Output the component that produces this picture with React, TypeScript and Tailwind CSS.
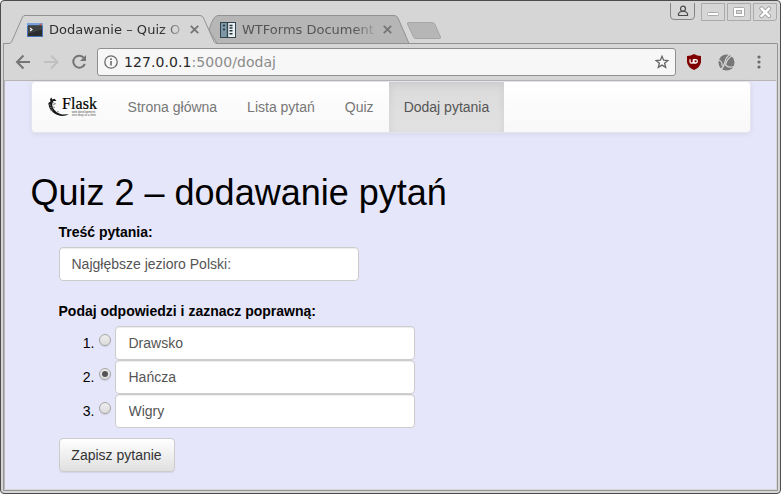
import type { ReactNode } from "react";

const ui = "font-['DejaVu_Sans',sans-serif]";

function CloseX() {
  return (
    <svg width="9" height="9" viewBox="0 0 9 9" className="shrink-0" stroke="#757575" strokeWidth="1.8">
      <path d="M.8 .8 8.2 8.2M8.2 .8 .8 8.2" />
    </svg>
  );
}

function TerminalIcon() {
  return (
    <svg width="16" height="14" viewBox="0 0 16 14" className="shrink-0">
      <rect width="16" height="14" fill="#4774b8" />
      <rect width="16" height="3" fill="#76a2df" />
      <rect x="1" y="2.5" width="14" height="10.5" fill="#2b2c2e" />
      <path d="M1 2.5h14v4L1 11z" fill="#404142" />
      <path d="M3 5l2 1.5L3 8" fill="none" stroke="#fff" strokeWidth="1.1" />
      <rect x="12.5" y=".7" width="2" height="1.3" fill="#f05040" />
    </svg>
  );
}

function DocsIcon() {
  return (
    <svg width="16" height="16" viewBox="0 0 16 16" className="shrink-0">
      <rect x=".5" y=".5" width="15" height="15" fill="#e9eff2" stroke="#34454f" />
      <rect x="1" y="1" width="6" height="14" fill="#7d97a5" />
      <path d="M7.5 1v14" stroke="#34454f" strokeWidth="1.4" />
      <path d="M3 3.5h2M3 7.5h2M9.500 3.500h3M9.500 6h3M9.500 8.800h3M9.500 11.800h3" stroke="#23333c" strokeWidth="1.5" />
    </svg>
  );
}

function TabStrip() {
  return (
    <div className={`relative h-[43px] shrink-0 ${ui} text-[13px]`}>
      <svg className="absolute -left-px -top-px" width="781" height="45" viewBox="0 0 781 45" fill="none" stroke="#929292">
        <path d="M209 30Q213 15.500 218 15.500H394Q397 15.500 398 18L409 43.500H217Z" fill="#b6b6b6" />
        <path d="M409 43.500H777.500" />
        <path d="M3.500 45V43.500H9Q11 43.500 12 41L22.500 17Q23.500 15.500 25 15.500H200Q202.500 15.500 203.500 18L214 41.500Q215 43.500 217 43.500" fill="#d6d6d6" />
        <path d="M408.500 22.500H432Q434 22.500 435 24.500L440.500 37Q441 38.500 439 38.500H416Q414 38.500 413.500 37L407.500 24Q407 22.500 408.500 22.500Z" fill="#b6b6b6" stroke="#a5a5a5" />
      </svg>
      <div className="relative flex h-full pt-[14px]">
        <div className="ml-[26px] flex h-[29px] w-[172px] items-center">
          <TerminalIcon />
          <span className="ml-[6px] w-[132px] whitespace-nowrap tracking-[.04px] text-[#303030] [mask-image:linear-gradient(to_right,black_112px,transparent_139px)]">Dodawanie – Quiz O</span>
          <span className="ml-[9px]"><CloseX /></span>
        </div>
        <div className="ml-[21px] flex h-[29px] w-[173px] items-center">
          <DocsIcon />
          <span className="ml-[6px] w-[132px] whitespace-nowrap text-[#555] [mask-image:linear-gradient(to_right,black_112px,transparent_137px)]">WTForms Document</span>
          <span className="ml-[9px]"><CloseX /></span>
        </div>
      </div>
      <svg className="absolute left-[668px] top-0" width="110" height="24" viewBox="669 1 110 24" fill="none">
        <path d="M670.500 3V16Q670.500 19.500 674 19.500H691Q694.500 19.500 694.500 16V3" stroke="#858585" />
        <circle cx="683" cy="8.700" r="2.500" stroke="#4c4c4c" strokeWidth="1.2" />
        <path d="M678.500 15.500V13.500Q680 11.500 681.500 11.500H684.500Q686 11.500 687.500 13.500V15.500Z" stroke="#4c4c4c" strokeWidth="1.2" />
        <g stroke="#aaa">
          <path d="M701.500 3.500V20.500H724.500V3.500ZM727.500 3.500V20.500H750.500V3.500ZM753.500 3.500V20.500H774Q776.500 20.500 776.500 18V3.500Z" />
          <rect x="707.500" y="12.500" width="11" height="3" rx="1" fill="#fff" />
          <rect x="733.500" y="7.500" width="11" height="9" rx="1" fill="#fff" />
          <rect x="736.500" y="10.500" width="5" height="3" fill="#d6d6d6" />
        </g>
        <path d="M761.500 8.500 769 16M769 8.500 761.500 16" stroke="#999" strokeWidth="4.200" strokeLinecap="round" />
        <path d="M761.500 8.500 769 16M769 8.500 761.500 16" stroke="#fff" strokeWidth="2.500" strokeLinecap="round" />
      </svg>
    </div>
  );
}

function Toolbar() {
  return (
    <div className={`flex h-[36px] shrink-0 items-center pl-[11px] ${ui}`}>
      <svg width="78" height="20" viewBox="12 52 78 20" fill="none" strokeWidth="2" className="shrink-0">
        <path d="M30 62H17M23.500 55.500 17 62 23.500 68.500" stroke="#757575" />
        <path d="M44 62H57M51 55.500 57.500 62 51 68.500" stroke="#c0c0c0" />
        <path d="M84 58A6 6 0 1 0 84.800 64" stroke="#757575" />
        <path d="M86 55V61H80Z" fill="#757575" />
      </svg>
      <div className="ml-[7px] flex h-[28px] w-[579px] shrink-0 items-center rounded-[3px] border border-[#8f8f8f] bg-[#f7f7f7] pl-[6px] pr-[6px]">
        <svg width="14" height="14" viewBox="0 0 14 14" fill="none" stroke="#6b6b6b" strokeWidth="1.300">
          <circle cx="7" cy="7" r="6.200" />
          <path d="M7 6V10.500M7 3.300V4.900" strokeWidth="1.600" />
        </svg>
        <span className="ml-[6px] text-[14px] tracking-[.07px] text-[#282828]">127.0.0.1<span className="text-[#8b8b8b]">:5000/dodaj</span></span>
        <svg className="ml-auto" width="14" height="14" viewBox="0 0 14 14" fill="none" stroke="#666" strokeWidth="1.300">
          <path d="M7 1.300 8.600 5.200 12.900 5.500 9.600 8.200 10.700 12.400 7 10.100 3.300 12.400 4.400 8.200 1.100 5.500 5.400 5.200Z" />
        </svg>
      </div>
      <svg className="ml-[11px] shrink-0" width="14" height="16" viewBox="0 0 14 16">
        <path d="M7 0Q10 2 14 2V8Q13.500 13 7 16Q.5 13 0 8V2Q4 2 7 0Z" fill="#800000" />
        <path d="M3 5.300V7.500A1.600 1.600 0 0 0 6.300 7.500V5.300M7 9V5.700H8.700A1.650 1.650 0 0 1 8.700 9Z" fill="none" stroke="#fff" strokeWidth="1.300" />
      </svg>
      <svg className="ml-[17px] shrink-0" width="17" height="17" viewBox="0 0 17 17">
        <circle cx="8.500" cy="8.500" r="8" fill="#777" />
        <g stroke="#d6d6d6" fill="none">
          <path d="M0 6Q4.500 6.500 4 12" strokeWidth="1.200" />
          <path d="M2.500 16Q6 13 7 8Q8 3 12 .5" strokeWidth="1.300" />
          <path d="M14.500 1.500Q8.500 5 7.500 11Q10.500 14.500 16 12.500" strokeWidth="1.200" />
        </g>
      </svg>
      <svg className="ml-[22px] shrink-0" width="4" height="14" viewBox="0 0 4 14" fill="#6b6b6b">
        <circle cx="2" cy="2" r="1.600" /><circle cx="2" cy="7" r="1.600" /><circle cx="2" cy="12" r="1.600" />
      </svg>
    </div>
  );
}

function FlaskLogo() {
  return (
    <div className="flex h-5 w-[50px]">
      <svg className="-mr-[8px] shrink-0" width="22" height="20" viewBox="0 0 22 20">
        <path d="M2 2 3.500 .5 4.200 2.500 6.500 1.800 8.500 4 5.500 4Q3.300 7 5 11Q8 16 14 17.500L21 17.200Q17 19.500 12 18.800Q4 16.500 1.200 10.500L.3 6 2.500 4.500Z" fill="#171717" />
        <path d="M0 7 3 8.500M.8 10 4 11M5 8 8 6.500M5 10 7 10.500M9 14.500 11 15M5 5.500 7 6.500M2 13 5 13" stroke="#777" strokeWidth=".8" />
      </svg>
      <div className="flex w-[36px] shrink-0 flex-col">
        <span className="h-[14px] font-['Liberation_Serif',serif] text-[16px] leading-[14px] tracking-[.1px] text-black [-webkit-text-stroke:.2px_black]">Flask</span>
        <span className="flex flex-col items-end whitespace-nowrap pr-[2px] font-['Liberation_Sans',sans-serif] text-[3px] leading-[3px] text-[#555]">
          <span>web development,</span>
          <span>one drop at a time</span>
        </span>
      </div>
    </div>
  );
}

function NavItem({ children, active = false }: { children: ReactNode; active?: boolean }) {
  return (
    <a className={`flex h-[50px] items-center whitespace-nowrap ${active ? "w-[115px] bg-linear-to-b from-[#dbdbdb] to-[#e2e2e2] px-[15px] text-[#555] shadow-[inset_0_3px_9px_rgba(0,0,0,.075)]" : "px-[15px] text-[#777]"}`}>{children}</a>
  );
}

function TextField({ value }: { value: string }) {
  return (
    <input readOnly value={value} className="block h-[34px] w-[300px] rounded-[4px] border border-[#ccc] bg-white px-[11.5px] text-[14px] text-[#555] shadow-[inset_0_1px_1px_rgba(0,0,0,.075)] outline-none" />
  );
}

function Answer({ n, value, checked = false }: { n: number; value: string; checked?: boolean }) {
  return (
    <li className="flex [&>input]:pl-[12.5px]">
      <span className="mt-[7px] w-[35.5px] text-right">{n}.</span>
      <span className="ml-[4.5px] mt-[8px] mr-[4px] flex size-3 items-center justify-center rounded-full border border-[#a6a6a6] bg-linear-to-b from-[#ededed] to-[#dcdcdc] shadow-[0_1px_1px_rgba(0,0,0,.12)]">
        {checked && <span className="size-[6px] rounded-full bg-[#555]" />}
      </span>
      <TextField value={value} />
    </li>
  );
}

export default function App() {
  return (
    <div className="h-[494px] w-[781px] bg-white">
      <div className="flex h-full w-full flex-col overflow-hidden rounded-[4px] border border-[#504c4e] bg-[#d6d6d6]">
        <TabStrip />
        <div className="mx-[2px] mb-[2px] flex min-h-0 flex-1 flex-col border-x border-b border-[#969696]">
          <div className="-ml-[3px] flex flex-col"><Toolbar /></div>
          <main className="mb-px mr-px flex-1 border-l border-t border-[#bab6b6] bg-[#e6e6fa] font-['Liberation_Sans',Arial,sans-serif] text-[14px] leading-5 text-black">
            <nav className="ml-[26px] flex h-[52px] w-[720px] rounded-[4px] border border-[#e5e5ef] bg-linear-to-b from-white to-[#f8f8f8] shadow-[0_1px_5px_rgba(0,0,0,.075)]">
              <div className="ml-4 mr-[14.6px] mt-[15px]"><FlaskLogo /></div>
              <NavItem>Strona główna</NavItem>
              <NavItem>Lista pytań</NavItem>
              <NavItem>Quiz</NavItem>
              <NavItem active>Dodaj pytania</NavItem>
            </nav>
            <h1 className="ml-[25.5px] mt-[40px] text-[36px] leading-[40px]">Quiz 2 – dodawanie pytań</h1>
            <form className="ml-[54px] mt-[9px]">
              <label className="-ml-[.5px] mb-[5px] block font-bold">Treść pytania:</label>
              <TextField value="Najgłębsze jezioro Polski:" />
              <label className="-ml-[.5px] mb-[5px] mt-[20px] block font-bold">Podaj odpowiedzi i zaznacz poprawną:</label>
              <ol>
                <Answer n={1} value="Drawsko" />
                <Answer n={2} value="Hańcza" checked />
                <Answer n={3} value="Wigry" />
              </ol>
              <button type="button" className="mt-[10px] h-[34px] w-[116px] rounded-[4px] border border-[#ccc] bg-linear-to-b from-white to-[#e0e0e0] pr-px text-[#333] shadow-[0_1px_1px_rgba(0,0,0,.075)]">Zapisz pytanie</button>
            </form>
          </main>
        </div>
      </div>
    </div>
  );
}
